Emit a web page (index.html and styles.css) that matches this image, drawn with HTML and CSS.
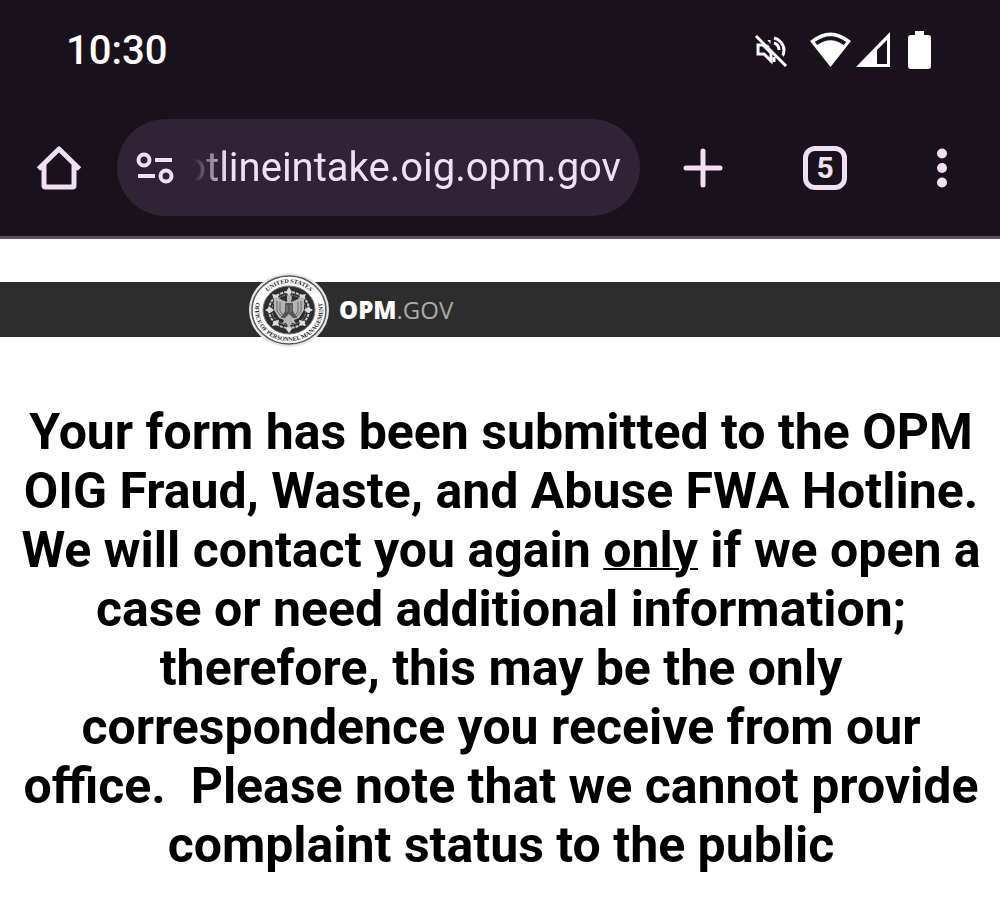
FILE: index.html
```html
<!DOCTYPE html>
<html lang="en">
<head>
    <meta charset="UTF-8">
    <meta name="viewport" content="width=device-width, initial-scale=1.0">
    <title>OPM OIG Hotline</title>
    <link rel="stylesheet" href="styles.css">
</head>
<body>
    <div class="browser">
        <div class="status-bar">
            <span class="clock">10:30</span>
            <div class="status-icons">
                <svg class="icon-mute" width="36" height="38" viewBox="0 0 36 38" fill="none" stroke="#fff" stroke-width="3">
                    <path d="M15 9v7M4 14h5l8 8v8l-7-7H4z"/>
                    <path d="M20 7c5 1 10 6 10 12 0 3-1 5-2 7M20 12c3 1 5 4 5 7M20 26v5"/>
                    <path d="M1 1l31 31" stroke="#19111b" stroke-width="3" transform="translate(3 1)"/>
                    <path d="M2 5l30 30"/>
                </svg>
                <svg class="icon-wifi" width="42" height="38" viewBox="0 0 42 38">
                    <path fill="#fff" d="M0 10Q20.500-7 41 10L20.500 36z"/>
                    <path fill="none" stroke="#19111b" stroke-width="4" d="M6 12.500Q20.500 2 35 12.500"/>
                </svg>
                <svg class="icon-signal" width="36" height="38" viewBox="0 0 36 38">
                    <path fill="#fff" d="M34 1v35H0z"/>
                    <path fill="#19111b" d="M31 9v24H21V19z"/>
                </svg>
                <svg class="icon-battery" width="24" height="38" viewBox="0 0 24 38">
                    <path fill="#fff" d="M7 0h9v4h4q3 0 3 3v28q0 3-3 3H3q-3 0-3-3V7q0-3 3-3h4z"/>
                </svg>
            </div>
        </div>
        <div class="toolbar">
            <button class="tool" aria-label="Home">
                <svg width="46" height="46" viewBox="0 0 46 46" fill="none" stroke="#f0e0f2" stroke-width="5" stroke-linejoin="round">
                    <path d="M2.500 24L23 4l20.500 20M8 20v20.500q0 1.500 1.500 1.500h27q1.500 0 1.500-1.500V20"/>
                </svg>
            </button>
            <div class="address">
                <svg width="38" height="32" viewBox="0 0 38 32" fill="none" stroke="#f0e0f2" stroke-width="4">
                    <circle cx="8" cy="8" r="5.500"/>
                    <circle cx="30" cy="24" r="5.500"/>
                    <path d="M19 8h17M2 24h17"/>
                </svg>
                <input class="url" type="text" dir="rtl" aria-label="Address" value="hotlineintake.oig.opm.gov">
            </div>
            <button class="tool" aria-label="New tab">
                <svg width="40" height="40" viewBox="0 0 40 40" stroke="#f0e0f2" stroke-width="5" stroke-linecap="round">
                    <path d="M20 3v34M3 20h34"/>
                </svg>
            </button>
            <button class="tool" aria-label="Open tabs"><span class="tab-count">5</span></button>
            <button class="tool" aria-label="Menu">
                <svg width="12" height="40" viewBox="0 0 12 40" fill="#f0e0f2">
                    <circle cx="6" cy="5.500" r="5"/>
                    <circle cx="6" cy="20" r="5"/>
                    <circle cx="6" cy="34.500" r="5"/>
                </svg>
            </button>
        </div>
    </div>

    <header class="site-header">
        <svg class="seal" width="80" height="74" viewBox="0 0 80 74">
            <defs>
                <path id="ring-top" d="M11 37a29 27 0 0 1 58 0"/>
                <path id="ring-bottom" d="M7.500 28A34 31 0 1 0 72.500 28"/>
            </defs>
            <ellipse cx="40" cy="37" rx="40" ry="37" fill="#e6e6e6"/>
            <ellipse cx="40" cy="37" rx="37" ry="34" fill="#fff" stroke="#555" stroke-width="1.500"/>
            <ellipse cx="40" cy="37" rx="26" ry="24" fill="#2d2d2d" stroke="#777"/>
            <text class="seal-text"><textPath href="#ring-top" startOffset="50%" text-anchor="middle">UNITED STATES</textPath></text>
            <text class="seal-text"><textPath href="#ring-bottom" startOffset="50%" text-anchor="middle">OFFICE OF PERSONNEL MANAGEMENT</textPath></text>
            <g fill="none" stroke="#c9c9c9" stroke-width="2" stroke-dasharray="3 1">
                <ellipse cx="40" cy="37" rx="20" ry="18"/>
                <ellipse cx="40" cy="37" rx="17" ry="15" stroke="#888" stroke-width="1"/>
            </g>
            <path fill="#ddd" d="M40 14l3 5-3 4-3-4zM40 51l3 5-3 4-3-4zM16 37l5-3 4 3-4 3zM64 37l-5-3-4 3 4 3zM23 21l6 1 1 5-5-1zM57 21l-6 1-1 5 5-1zM23 53l6-1 1-5-5 1zM57 53l-6-1-1-5 5 1z"/>
            <path fill="#b5b5b5" d="M38 23q3-3 5 1l-1 5 5-2q6-4 8-2v12l-5 8-5 2 2 4-4-1-3 5-3-5-4 1 2-4-5-2-5-8V25q2-2 8 2l5 2z"/>
            <path fill="none" stroke="#666" stroke-width="1" d="M28 28v10l5 6M31 29v9l4 6M52 28v10l-5 6M49 29v9l-4 6"/>
            <path fill="#555" d="M36 30h8v8l4 7h-4l-4-4-4 4h-4l4-7z"/>
            <path fill="none" stroke="#888" stroke-width="1" d="M38 32v7M42 32v7"/>
        </svg>
        <span class="brand"><b>OPM</b>.GOV</span>
    </header>

    <main class="message">
        <h1>Your form has been submitted to the OPM OIG Fraud, Waste, and Abuse FWA Hotline. We will contact you again <u>only</u> if we open a case or need additional information; therefore, this may be the only correspondence you receive from our office.&nbsp; Please note that we cannot provide complaint status to the public</h1>
    </main>
</body>
</html>
```
FILE: styles.css
```css
body {
    margin: 0;
    background: #fff;
    color: #000;
    font-family: Roboto, "Liberation Sans", sans-serif;
}
.browser {
    background: #19111b;
    border-bottom: 3px solid #5b525d;
}
.status-bar {
    display: flex;
    justify-content: space-between;
    align-items: center;
    height: 100px;
    padding: 0 68px 0 66px;
}
.clock {
    color: #fff;
    font-size: 40px;
    font-weight: 500;
}
.status-icons {
    display: flex;
    align-items: center;
}
.icon-wifi {
    margin-left: 20px;
}
.icon-signal {
    margin-left: 4px;
}
.icon-battery {
    margin-left: 16px;
}
.toolbar {
    display: grid;
    grid-template-columns: 117px minmax(0, 1fr) 126px 118px 116px;
    align-items: center;
    padding: 19px 0 20px;
}
.tool {
    display: flex;
    justify-content: center;
    align-items: center;
    height: 97px;
    padding: 0;
    border: none;
    background: none;
    color: #f0e0f2;
    cursor: pointer;
}
.tab-count {
    box-sizing: border-box;
    width: 44px;
    height: 44px;
    border: 5px solid #f0e0f2;
    border-radius: 12px;
    font: 700 30px/34px Roboto, sans-serif;
}
.address {
    display: flex;
    align-items: center;
    gap: 20px;
    height: 97px;
    padding: 0 19px;
    border-radius: 49px;
    background: #302335;
}
.address svg {
    flex: none;
}
.url {
    flex: 1;
    min-width: 0;
    height: 60px;
    padding: 0;
    border: none;
    outline: none;
    background: none;
    color: #f0e0f2;
    font-family: Roboto, sans-serif;
    font-size: 40px;
    mask-image: linear-gradient(to right, transparent, #000 32px);
}
.site-header {
    display: flex;
    align-items: center;
    height: 55px;
    margin-top: 43px;
    padding-left: 249px;
    background: #2d2d2d;
}
.seal {
    flex: none;
    margin: -10px 10px -10px 0;
}
.seal-text {
    font: 700 6px "Liberation Serif", serif;
    fill: #222;
}
.brand {
    color: #aaa;
    font-family: "Open Sans", sans-serif;
    font-size: 24px;
    line-height: 32px;
}
.brand b {
    color: #fff;
    font-weight: 800;
}
.message {
    padding: 66px 15px 46px 17px;
    text-align: center;
}
.message h1 {
    margin: 0;
    font-size: 50px;
    font-weight: 700;
    line-height: 59px;
}
.message u {
    text-decoration-thickness: 2px;
}
```
